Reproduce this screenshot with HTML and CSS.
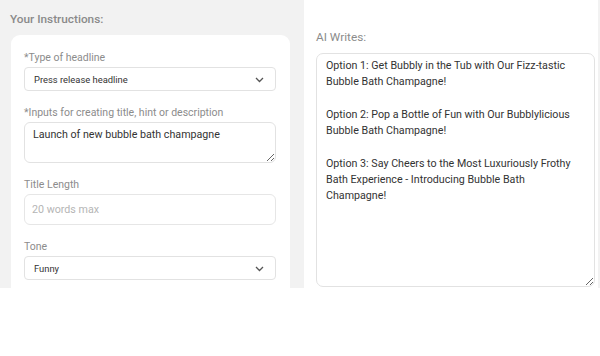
FILE: index.html
```html
<!DOCTYPE html>
<html lang="en">
<head>
    <meta charset="UTF-8">
    <title>Headline Writer</title>
    <link rel="stylesheet" href="styles.css">
</head>
<body>
    <div class="app">
        <!-- Instructions column -->
        <section class="instructions">
            <h2 class="section-title">Your Instructions:</h2>
            <div class="card">
                <label class="field-label">*Type of headline</label>
                <div class="select-box">
                    <span>Press release headline</span>
                    <svg class="chevron" width="9" height="6" viewBox="0 0 9 6"><path d="M1 1l3.5 3.5 3.5-3.5" fill="none" stroke="#555" stroke-width="1.3"/></svg>
                </div>

                <label class="field-label">*Inputs for creating title, hint or description</label>
                <textarea class="text-area" readonly>Launch of new bubble bath champagne</textarea>

                <label class="field-label">Title Length</label>
                <input class="text-input" type="text" placeholder="20 words max">

                <label class="field-label">Tone</label>
                <div class="select-box">
                    <span>Funny</span>
                    <svg class="chevron" width="9" height="6" viewBox="0 0 9 6"><path d="M1 1l3.5 3.5 3.5-3.5" fill="none" stroke="#555" stroke-width="1.3"/></svg>
                </div>
            </div>
        </section>

        <!-- Output column -->
        <section class="output">
            <h2 class="output-title">AI Writes:</h2>
            <textarea class="output-area" readonly>Option 1: Get Bubbly in the Tub with Our Fizz-tastic Bubble Bath Champagne!

Option 2: Pop a Bottle of Fun with Our Bubblylicious Bubble Bath Champagne!

Option 3: Say Cheers to the Most Luxuriously Frothy Bath Experience - Introducing Bubble Bath Champagne!</textarea>
        </section>
        <div class="edge"></div>
    </div>
</body>
</html>
```

FILE: styles.css
```css
* {
    margin: 0;
    padding: 0;
    box-sizing: border-box;
}

body {
    font-family: Roboto, 'Liberation Sans', sans-serif;
    background: #fff;
}

.app {
    display: flex;
    height: 288px;
    overflow: hidden;
}

/* Left column */
.instructions {
    width: 304px;
    background: #f2f2f2;
    padding: 11px 14px 0 11px;
}

.section-title {
    font-size: 11.8px;
    font-weight: 500;
    color: #8a8a8a;
    margin-left: -1px;
    line-height: 16px;
    margin-bottom: 8px;
}

.card {
    background: #fff;
    border-radius: 9px;
    padding: 16px 14px 20px 13px;
    height: 300px;
}

.field-label {
    display: block;
    font-size: 10.5px;
    color: #8c8c8c;
    line-height: 14px;
    margin-bottom: 2px;
}

.select-box {
    display: flex;
    align-items: center;
    justify-content: space-between;
    height: 24px;
    border: 1px solid #e2e2e2;
    border-radius: 4px;
    padding: 0 11px 0 9px;
    font-size: 9.4px;
    color: #333;
    margin-bottom: 15px;
}

.chevron {
    margin-top: 1px;
}

.text-area {
    display: block;
    width: 100%;
    height: 41px;
    border: 1px solid #e2e2e2;
    border-radius: 6px;
    padding: 4px 8px;
    font-family: inherit;
    font-size: 10.7px;
    line-height: 15px;
    color: #333;
    resize: vertical;
    outline: none;
    margin-bottom: 15px;
}

.text-input {
    display: block;
    width: 100%;
    height: 31px;
    border: 1px solid #e6e6e6;
    border-radius: 6px;
    padding: 0 7px;
    font-family: inherit;
    font-size: 10.7px;
    color: #333;
    outline: none;
    margin-bottom: 15px;
}

.text-input::placeholder {
    color: #b5b5b5;
}

/* Right column */
.output {
    flex: 1;
    padding: 30px 3px 0 12px;
}

.output-title {
    font-size: 11.8px;
    font-weight: 400;
    color: #8c8c8c;
    line-height: 14px;
    margin-bottom: 9px;
}

.output-area {
    display: block;
    width: 100%;
    height: 234px;
    border: 1px solid #e2e2e2;
    border-radius: 7px;
    padding: 4px 9px;
    font-family: inherit;
    font-size: 10.7px;
    line-height: 16.3px;
    color: #333;
    resize: vertical;
    outline: none;
}

.edge {
    width: 2px;
    background: #f2f2f2;
}
```
